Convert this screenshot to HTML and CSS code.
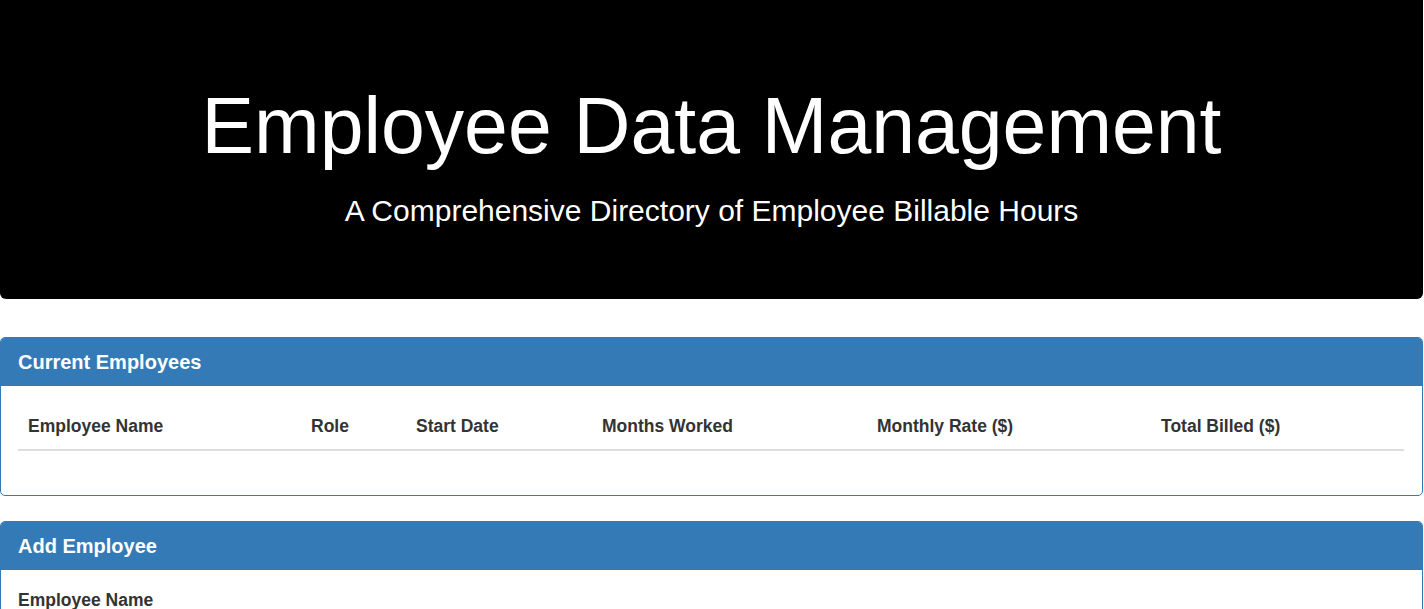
FILE: index.html
```html
<!DOCTYPE html>
<html>
<head>
<meta charset="utf-8">
<title>Employee Data Management</title>
<link rel="stylesheet" href="styles.css">
</head>
<body>
<div class="page">
  <header class="jumbotron">
    <h1 class="title">Employee Data Management</h1>
    <p class="subtitle">A Comprehensive Directory of Employee Billable Hours</p>
  </header>

  <section class="panel">
    <div class="panel-heading">Current Employees</div>
    <div class="panel-body">
      <table class="emp-table">
        <colgroup>
          <col class="c1"><col class="c2"><col class="c3"><col class="c4"><col class="c5"><col class="c6">
        </colgroup>
        <thead>
          <tr>
            <th>Employee Name</th>
            <th>Role</th>
            <th>Start Date</th>
            <th>Months Worked</th>
            <th>Monthly Rate ($)</th>
            <th>Total Billed ($)</th>
          </tr>
        </thead>
        <tbody></tbody>
      </table>
    </div>
  </section>

  <section class="panel">
    <div class="panel-heading">Add Employee</div>
    <div class="panel-body form-body">
      <label class="field-label">Employee Name</label>
    </div>
  </section>
</div>
</body>
</html>
```

FILE: styles.css
```css
html, body {
  margin: 0;
  padding: 0;
  background: #fff;
}
body {
  font-family: "Liberation Sans", Arial, Helvetica, sans-serif;
  font-size: 17.5px;
  color: #333;
  overflow: hidden;
}
.page {
  width: 1423px;
}
.jumbotron {
  background: #000;
  color: #fff;
  height: 299px;
  box-sizing: border-box;
  border-radius: 0 0 6px 6px;
  display: flex;
  flex-direction: column;
  align-items: center;
  padding-top: 78px;
  margin-bottom: 38px;
}
.title {
  margin: 0;
  font-weight: 400;
  font-size: 78.75px;
  line-height: 96px;
}
.subtitle {
  margin: 19px 0 0;
  font-size: 30px;
  line-height: 36px;
}
.panel {
  border: 1px solid #337ab7;
  border-radius: 5px;
  margin-bottom: 25px;
  overflow: hidden;
}
.panel-heading {
  background: #337ab7;
  color: #fff;
  font-weight: 700;
  font-size: 20px;
  height: 48px;
  line-height: 48px;
  padding: 0 17px;
}
.panel-body {
  padding: 18px 18px 18px 17px;
}
.emp-table {
  width: 100%;
  border-collapse: collapse;
  table-layout: fixed;
  margin-bottom: 26px;
}
.c1 { width: 283px; }
.c2 { width: 105px; }
.c3 { width: 186px; }
.c4 { width: 275px; }
.c5 { width: 284px; }
.c6 { width: auto; }
.emp-table th {
  text-align: left;
  font-weight: 700;
  font-size: 17.5px;
  padding: 10px 10px;
  height: 25px;
  line-height: 25px;
  border-bottom: 2px solid #ddd;
  color: #333;
}
.form-body {
  padding-top: 20px;
}
.field-label {
  display: block;
  font-weight: 700;
  font-size: 17.5px;
}
```
